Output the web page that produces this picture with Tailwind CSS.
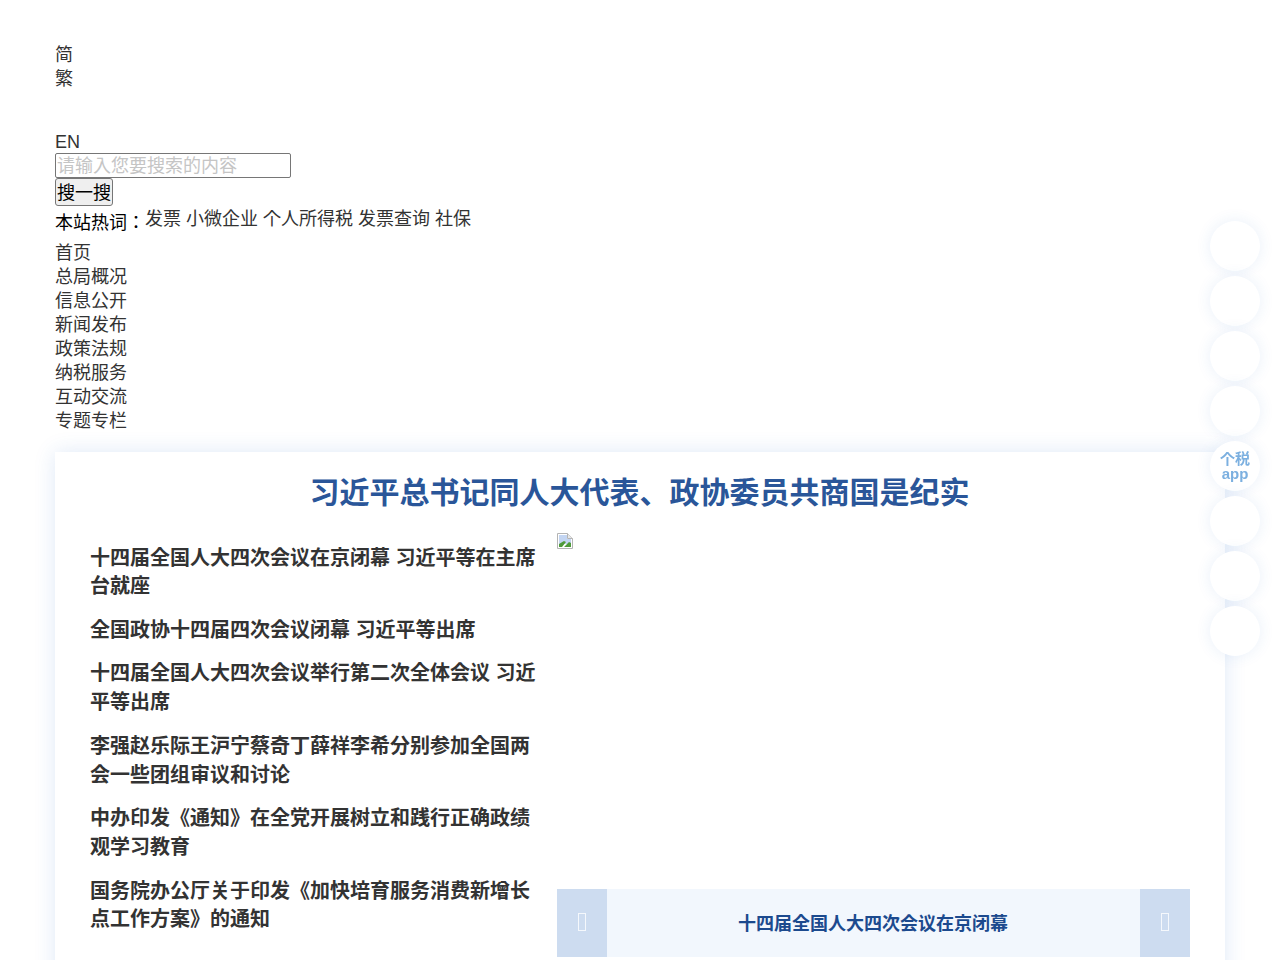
<!DOCTYPE html>
<html>
<head>
  <meta charset="UTF-8">
  <meta name="viewport" content="width=device-width, initial-scale=1.0">
  <title>国家税务总局</title>
  <script src="https://cdn.jsdelivr.net/npm/@tailwindcss/browser@4"></script>
</head>
<body class="bg-white text-[#333] text-[18px] leading-[24px] font-['Liberation_Sans','Noto_Sans_CJK_JP',sans-serif] h-[960px] overflow-hidden">
  <div class="px-[55px] pt-[43px]">
    <header>
      <div><a href="#">简</a></div>
      <div><a href="#">繁</a></div>
      <div class="mt-[39px] h-[23px]"><a href="#">EN</a></div>
      <form class="flex flex-col items-start">
        <input class="w-[236px] h-[25px] px-[1px] pt-[2px] border border-[#767676] rounded-[2px] text-[18px] placeholder:text-[#c5c5c5]" type="text" placeholder="请输入您要搜索的内容">
        <button class="h-[28px] px-[1px] pt-[2px] border border-[#767676] rounded-[3px] bg-[#efefef] text-black text-[18px]" type="button">搜一搜</button>
      </form>
      <div class="flex h-[34px] items-start">
        <span class="text-black pt-[5px]">本站热词：</span>
        <span class="whitespace-pre pt-[1px]">发票 小微企业 个人所得税 发票查询 社保</span>
      </div>
    </header>
    <nav class="flex flex-col pt-[1px]">
      <a href="#">首页</a>
      <a href="#">总局概况</a>
      <a href="#">信息公开</a>
      <a href="#">新闻发布</a>
      <a href="#">政策法规</a>
      <a href="#">纳税服务</a>
      <a href="#">互动交流</a>
      <a href="#">专题专栏</a>
    </nav>
    <main class="mt-[19px] w-[1170px] h-[600px] bg-white shadow-[0_0_20px_rgba(42,110,200,0.15)] pt-[21px] px-[35px]">
      <h1 class="pr-[1px] text-center text-[30px] leading-[40px] font-bold text-[#2a5699]">习近平总书记同人大代表、政协委员共商国是纪实</h1>
      <div class="flex mt-[20px] gap-[17px]">
        <ul class="w-[450px] pt-[10.5px] text-[20px] leading-[28.8px] font-bold">
          <li class="mb-[14.8px]">十四届全国人大四次会议在京闭幕 习近平等在主席台就座</li>
          <li class="mb-[14.8px]">全国政协十四届四次会议闭幕 习近平等出席</li>
          <li class="mb-[14.8px]">十四届全国人大四次会议举行第二次全体会议 习近平等出席</li>
          <li class="mb-[14.8px]">李强赵乐际王沪宁蔡奇丁薛祥李希分别参加全国两会一些团组审议和讨论</li>
          <li class="mb-[14.8px]">中办印发《通知》在全党开展树立和践行正确政绩观学习教育</li>
          <li class="mb-[14.8px]">国务院办公厅关于印发《加快培育服务消费新增长点工作方案》的通知</li>
        </ul>
        <div class="w-[633px] flex flex-col">
          <div class="h-[356px]">
            <svg width="16" height="16" viewBox="0 0 16 16">
              <path d="M.5 .5h10l5 5v10h-15z" fill="#fff" stroke="#b4b4b4"/>
              <path d="M10.5 .5v5h5" fill="#e8e8e8" stroke="#b4b4b4"/>
              <path d="M2 2h8v4h4v5H2z" fill="#c3d5f2"/>
              <path d="M2 11l5-3 2 1-4 5H2zM7 14l5-5 2 1v4z" fill="#4f9a3a"/>
            </svg>
          </div>
          <div class="flex h-[68px] bg-[#f2f7fd]">
            <button class="w-[50px] bg-[#cddcf0] flex items-center justify-center" type="button"><span class="block w-[8px] h-[18px] mr-[1px] mb-[2px] border border-white/80"></span></button>
            <p class="flex-1 pr-[1px] text-center text-[18px] leading-[70px] font-bold text-[#1c4a8e]">十四届全国人大四次会议在京闭幕</p>
            <button class="w-[50px] bg-[#cddcf0] flex items-center justify-center" type="button"><span class="block w-[8px] h-[18px] mr-[1px] mb-[2px] border border-white/80"></span></button>
          </div>
        </div>
      </div>
    </main>
  </div>

  <aside class="fixed left-[1210px] top-[221px] flex flex-col gap-[5px]">
    <a class="w-[50px] h-[50px] rounded-full bg-white shadow-[0_0_15px_rgba(42,110,200,0.1)]" href="#"></a>
    <a class="w-[50px] h-[50px] rounded-full bg-white shadow-[0_0_15px_rgba(42,110,200,0.1)]" href="#"></a>
    <a class="w-[50px] h-[50px] rounded-full bg-white shadow-[0_0_15px_rgba(42,110,200,0.1)]" href="#"></a>
    <a class="w-[50px] h-[50px] rounded-full bg-white shadow-[0_0_15px_rgba(42,110,200,0.1)]" href="#"></a>
    <a class="w-[50px] h-[50px] rounded-full bg-white shadow-[0_0_15px_rgba(42,110,200,0.1)] flex flex-col items-center justify-center text-[15px] leading-[15px] font-bold text-[#7cb0e0]" href="#"><span>个税</span><span>app</span></a>
    <a class="w-[50px] h-[50px] rounded-full bg-white shadow-[0_0_15px_rgba(42,110,200,0.1)]" href="#"></a>
    <a class="w-[50px] h-[50px] rounded-full bg-white shadow-[0_0_15px_rgba(42,110,200,0.1)]" href="#"></a>
    <a class="w-[50px] h-[50px] rounded-full bg-white shadow-[0_0_15px_rgba(42,110,200,0.1)]" href="#"></a>
  </aside>
</body>
</html>
